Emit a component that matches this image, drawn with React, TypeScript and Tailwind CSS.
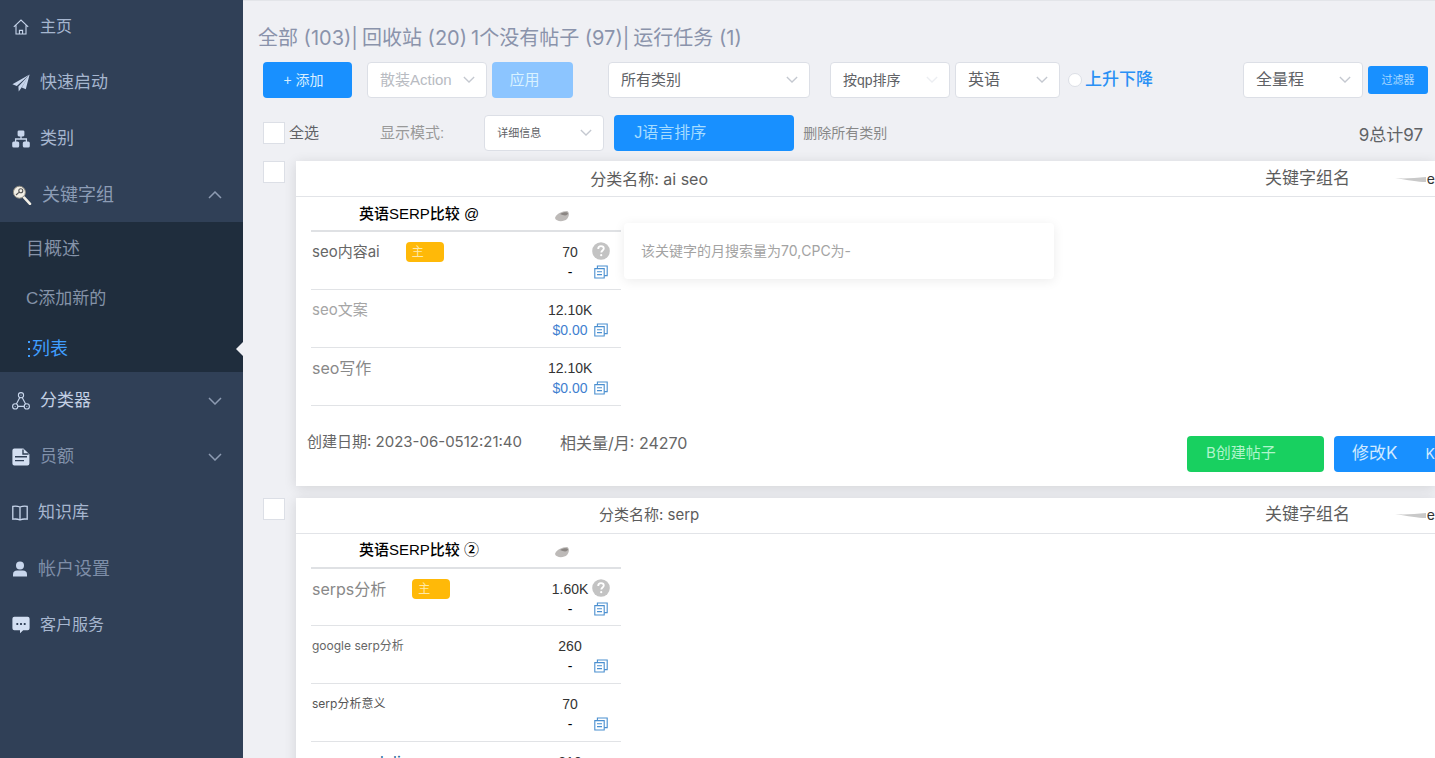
import type { ReactNode } from "react"

const copyIcon = (
    <svg viewBox="0 0 14 14" className="block h-3.5 w-3.5" fill="none" stroke="#4a8fd0" strokeWidth="1.1">
        <path d="M0.8 3.6h9.4v9.4H0.8z" />
        <path d="M3.4 3.6V1h9.8v9.6h-3" />
        <path d="M3 6.8h5M3 9.6h5" />
    </svg>
)

const helpIcon = (
    <svg viewBox="0 0 18 18" className="block h-[18px] w-[18px]">
        <circle cx="9" cy="9" r="8.8" fill="#c3c3c3" />
        <path d="M6.2 6.9c0-1.7 1.2-2.7 2.8-2.7s2.8 1 2.8 2.4c0 1.9-2.5 2-2.5 4" fill="none" stroke="#fff" strokeWidth="1.8" />
        <circle cx="9.2" cy="13.2" r="1.1" fill="#fff" />
    </svg>
)

function Chevron({ up = false, className }: { up?: boolean; className: string }) {
    return (
        <svg viewBox="0 0 14 8" className={className} fill="none" stroke="currentColor" strokeWidth="1.5">
            <path d={up ? "M1 7l6-6 6 6" : "M1 1l6 6 6-6"} />
        </svg>
    )
}

const icons: Record<string, ReactNode> = {
    home: (
        <svg viewBox="0 0 18 18" className="h-[18px] w-[18px]" fill="none" stroke="#c8d6ec" strokeWidth="1.1">
            <path d="M1.8 8.8L9 2l7.2 6.8M4 7v9h10V7" />
            <path d="M7.4 16v-3.6h3.2V16" />
        </svg>
    ),
    plane: (
        <svg viewBox="0 0 18 18" className="h-[18px] w-[18px]" fill="#c8d6ec">
            <path d="M17.6 0.6L0.4 10.2l4.4 1.9zM17.6 0.6L6.4 12.6l0.3 4.8 2.4-3.2zM17.6 0.6l-7.8 12.8 4 1.8z" />
        </svg>
    ),
    tree: (
        <svg viewBox="0 0 18 18" className="h-[18px] w-[18px]" fill="#c8d6ec">
            <rect x="5.6" y="0.4" width="6.8" height="6" rx="1.4" />
            <rect x="0.2" y="11.4" width="7" height="6.2" rx="1.6" />
            <rect x="10.8" y="11.4" width="7" height="6.2" rx="1.6" />
            <path d="M9 6v3M3.6 12V9h10.8v3" fill="none" stroke="#c8d6ec" strokeWidth="1.3" />
        </svg>
    ),
    search: (
        <svg viewBox="0 0 20 20" className="h-5 w-5" fill="none">
            <path d="M12 12.4l6 6.4" stroke="#f2efe6" strokeWidth="2.6" strokeLinecap="round" />
            <circle cx="7.4" cy="7.2" r="6" fill="#f2efe6" stroke="#8d8a80" strokeWidth="1" />
            <path d="M4 10l3-2.6" stroke="#555" strokeWidth="1.2" />
            <circle cx="8.8" cy="5.8" r="2" stroke="#555" strokeWidth="1.1" />
        </svg>
    ),
    nodes: (
        <svg viewBox="0 0 18 18" className="h-[18px] w-[18px]" fill="none" stroke="#c8d6ec" strokeWidth="1.1">
            <circle cx="9" cy="3.2" r="2.6" />
            <circle cx="3.2" cy="14.4" r="2.6" />
            <circle cx="14.8" cy="14.4" r="2.6" />
            <path d="M7.8 5.6L4.4 12M10.2 5.6l3.4 6.4M5.8 14.4h6.4" />
            <path d="M9 2.8v0.8M3.2 14v0.8M14.8 14v0.8" />
        </svg>
    ),
    doc: (
        <svg viewBox="0 0 18 18" className="h-[18px] w-[18px]">
            <path d="M2.4 0.6h9l6 5.6v9.2a2 2 0 0 1-2 2h-13a2 2 0 0 1-2-2V2.6a2 2 0 0 1 2-2z" fill="#d3dff2" />
            <path d="M11 1.4V6h5.6M3 8.8h12M3 12.6h9" fill="none" stroke="#304057" strokeWidth="1.4" />
        </svg>
    ),
    book: (
        <svg viewBox="0 0 16 16" className="h-4 w-4" fill="none" stroke="#c8d6ec" strokeWidth="1.3">
            <path d="M8 2C6 1.2 3 1 0.8 1.4v12.8c2.4-0.4 5.2-0.2 7.2 0.8 2-1 4.8-1.2 7.2-0.8V1.4C13 1 10 1.2 8 2zM8 2V15" />
        </svg>
    ),
    user: (
        <svg viewBox="0 0 16 16" className="h-4 w-4" fill="#c8d6ec">
            <circle cx="8" cy="4.4" r="4" />
            <path d="M1 15.4v-2.2c0-2.2 1.8-3.6 4-3.6h6c2.2 0 4 1.4 4 3.6v2.2z" />
        </svg>
    ),
    chat: (
        <svg viewBox="0 0 18 18" className="h-[18px] w-[18px]">
            <path d="M2.4 0.8h13.2a2 2 0 0 1 2 2v9.4a2 2 0 0 1-2 2h-4.4L8 17.2v-3H2.4a2 2 0 0 1-2-2V2.8a2 2 0 0 1 2-2z" fill="#d3dff2" />
            <path d="M4.4 8h1.8M8.1 8h1.8M11.8 8h1.8" stroke="#304057" strokeWidth="1.8" />
        </svg>
    ),
}

interface NavItemProps {
    icon: string
    label: string
    text: string
    arrow?: "up" | "down"
}

function NavItem({ icon, label, text, arrow }: NavItemProps) {
    return (
        <a href="#" className="flex h-14 items-center gap-2.5 px-3 pt-0.5">
            {icons[icon]}
            <span className={text}>{label}</span>
            {arrow && <Chevron up={arrow === "up"} className="mr-[9px] ml-auto h-2 w-3.5 text-[#8d9bb2]" />}
        </a>
    )
}

interface PickerProps {
    label: string
    value: string
    box: string
    arrow?: string
}

function Picker({ label, value, box, arrow = "text-[#c4c8d0]" }: PickerProps) {
    return (
        <div className={`relative shrink-0 ${box}`}>
            <select aria-label={label} className="h-9 w-full appearance-none rounded border border-[#dcdfe6] bg-white pr-6 pl-3">
                <option>{value}</option>
            </select>
            <Chevron className={`pointer-events-none absolute top-3.5 right-3 h-[7px] w-3 ${arrow}`} />
        </div>
    )
}

const box = "h-[22px] w-[22px] shrink-0 appearance-none border border-[#dcdfe6] bg-white"

interface Keyword {
    name: string
    text: string
    volume: string
    cost: string
    tag?: string
}

interface GroupProps {
    category: string
    title: string
    heading: string
    keywords: Keyword[]
    tip?: string
    footer?: boolean
}

function Group({ category, title, heading, keywords, tip, footer }: GroupProps) {
    return (
        <section className="flex gap-[11px]">
            <input type="checkbox" aria-label={category} className={box} />
            <div className="min-w-0 flex-1 bg-white shadow-[0_2px_12px_rgba(0,0,0,0.12)]">
                <div className="flex h-9 items-center border-b border-[#e2e4e8] text-[#5c5c5c]">
                    <h2 className={`w-[62%] text-center ${title}`}>分类名称: {category}</h2>
                    <div className="ml-auto flex w-[170px] items-center text-[17px] whitespace-nowrap">
                        <span>关键字组名</span>
                        <svg viewBox="0 0 34 10" className="ml-auto h-2.5 w-[34px]">
                            <path d="M2 4c8 1 20 0 31-1v5c-8 0-18-2-31-4z" fill="#c9c9c9" />
                        </svg>
                        <span className="text-sm text-[#333]">e</span>
                    </div>
                </div>
                <div className="relative px-[15px]">
                    <table className="w-[310px] table-fixed border-collapse font-['Liberation_Sans','Noto_Sans_CJK_SC',sans-serif] text-sm text-[#333]">
                        <thead>
                            <tr className="h-[34px] border-b-2 border-[#dfe1e4] text-black">
                                <th className="pl-12 text-left text-[15px] font-medium">{heading}</th>
                                <th className="w-11">
                                    <svg viewBox="0 0 16 12" className="mt-1 ml-1.5 h-3 w-4">
                                        <path d="M1 8C2 4 8 1 13 1c3 1 2 6 0 8-3 3-11 3-12-1z" fill="#bdbab8" />
                                        <path d="M6 4c3-2 7-2 8-1 0 3-4 3-8 1z" fill="#8b8683" />
                                    </svg>
                                </th>
                                <th className="w-[29px]"></th>
                            </tr>
                        </thead>
                        <tbody>
                            {keywords.map((k) => (
                                <tr key={k.name} className="h-[58px] border-b border-[#e1e3e6] align-top leading-5">
                                    <td className="pt-2.5 pl-px">
                                        <div className="flex h-5 items-center gap-[26px] font-['Inter','Noto_Sans_CJK_SC',sans-serif]">
                                            <span className={k.text}>{k.name}</span>
                                            {k.tag !== undefined && (
                                                <span className="h-5 w-[38px] rounded bg-[#ffb908] pl-1.5 text-xs leading-5 text-[#ffe9a8]">{k.tag}</span>
                                            )}
                                        </div>
                                    </td>
                                    <td className="pt-2.5 text-center whitespace-nowrap">
                                        <div>{k.volume}</div>
                                        <div className={k.cost === "-" ? "text-black" : "text-[#3f7fd0]"}>{k.cost}</div>
                                    </td>
                                    <td className="pt-2.5">
                                        <div className="h-5">{k.tag !== undefined && helpIcon}</div>
                                        <button aria-label="复制" className="ml-0.5 block pt-[3px]">{copyIcon}</button>
                                    </td>
                                </tr>
                            ))}
                        </tbody>
                    </table>
                    {tip && (
                        <div role="tooltip" className="absolute top-[26px] left-[328px] flex h-14 w-[430px] items-center rounded bg-white pl-[17px] text-sm text-[#a3a3a3] shadow-[0_2px_12px_rgba(0,0,0,0.08)]">
                            {tip}
                        </div>
                    )}
                </div>
                {footer && (
                    <div className="flex h-20 items-center pb-1.5 pl-[11px] text-[15px] text-[#666]">
                        <span className="whitespace-nowrap">创建日期: 2023-06-0512:21:40</span>
                        <span className="ml-[38px] text-base whitespace-nowrap">相关量/月: 24270</span>
                        <button className="mt-[22px] ml-auto h-9 w-[137px] rounded bg-[#18d060] pl-[19px] text-left text-[#b0f5cc]">B创建帖子</button>
                        <button className="mt-[22px] ml-2.5 flex h-9 w-[101px] items-center justify-between rounded-l bg-[#1890ff] pl-[18px] text-[17px] text-[#d0eaff]">
                            修改K <span className="text-sm">K</span>
                        </button>
                    </div>
                )}
            </div>
        </section>
    )
}

const seoKeywords: Keyword[] = [
    { name: "seo内容ai", text: "text-[15px] text-[#666]", volume: "70", cost: "-", tag: "主" },
    { name: "seo文案", text: "text-[15px] text-[#a5a5a5]", volume: "12.10K", cost: "$0.00" },
    { name: "seo写作", text: "text-base text-[#888]", volume: "12.10K", cost: "$0.00" },
]

const serpKeywords: Keyword[] = [
    { name: "serps分析", text: "text-base text-[#888]", volume: "1.60K", cost: "-", tag: "主" },
    { name: "google serp分析", text: "text-xs text-[#666]", volume: "260", cost: "-" },
    { name: "serp分析意义", text: "text-xs text-[#555]", volume: "70", cost: "-" },
    { name: "serp modeling", text: "text-base text-[#266a9c]", volume: "210", cost: "-" },
]

export default function App() {
    return (
        <div className="flex h-screen overflow-hidden bg-[#eff0f4] font-['Liberation_Sans','Noto_Sans_CJK_SC',sans-serif]">
            <nav className="w-[243px] shrink-0 bg-[#304057] text-[#a6b6cf]">
                <div className="-mt-0.5">
                    <NavItem icon="home" label="主页" text="text-base" />
                    <NavItem icon="plane" label="快速启动" text="text-[17px]" />
                    <NavItem icon="tree" label="类别" text="text-[17px]" />
                    <NavItem icon="search" label="关键字组" text="text-lg text-[#8c9cb5]" arrow="up" />
                </div>
                <div className="bg-[#1f2d3d] pl-[26px] text-[#8593a8]">
                    <a href="#" className="flex h-[50px] items-center pt-[3px] text-lg">目概述</a>
                    <a href="#" className="flex h-[50px] items-center pt-[3px] text-[17px]">C添加新的</a>
                    <a href="#" className="flex h-[50px] items-center pt-[3px] text-lg text-[#409eff]">
                        <svg viewBox="0 0 6 18" className="h-[18px] w-1.5" fill="#409eff">
                            <path d="M2 1h2v2H2zM2 8h2v2H2zM2 15h2v2H2z" />
                        </svg>
                        列表
                        <svg viewBox="0 0 7 14" className="ml-auto h-3.5 w-[7px]" fill="#eff0f4">
                            <path d="M7 0v14L0 7z" />
                        </svg>
                    </a>
                </div>
                <NavItem icon="nodes" label="分类器" text="text-[17px] text-[#c3d0e4]" arrow="down" />
                <NavItem icon="doc" label="员额" text="text-[17px] text-[#8292ab]" arrow="down" />
                <NavItem icon="book" label="知识库" text="text-[17px]" />
                <NavItem icon="user" label="帐户设置" text="text-lg text-[#7e8ea8]" />
                <NavItem icon="chat" label="客户服务" text="text-base" />
            </nav>

            <main className="min-w-0 flex-1 border-t border-[#e3e5e9] pl-5">
                <div className="-ml-[5px] flex h-[61px] items-center gap-1 pt-3 font-['Inter','Noto_Sans_CJK_SC',sans-serif] text-xl whitespace-nowrap text-[#8a93ab]">
                    <a href="#">全部 (103)|</a>
                    <a href="#">回收站 (20)</a>
                    <a href="#">1个没有帖子 (97)|</a>
                    <a href="#">运行任务 (1)</a>
                </div>

                <div className="flex items-center pr-[7px] whitespace-nowrap text-[#606266]">
                    <button className="h-9 w-[89px] shrink-0 rounded bg-[#1890ff] pr-2 text-sm text-[#d8efff]">+ 添加</button>
                    <Picker label="批量操作" value="散装Action" box="ml-[15px] w-[120px] text-[15px] text-[#b8bbc2]" />
                    <button className="ml-[5px] h-9 w-[81px] shrink-0 rounded bg-[#8cc5ff] pr-4 text-[15px] text-[#d9f2ff]">应用</button>
                    <Picker label="类别" value="所有类别" box="ml-[35px] w-[202px] text-[15px]" />
                    <Picker label="排序" value="按qp排序" box="ml-5 w-[120px] text-sm" arrow="text-[#eceef2]" />
                    <Picker label="语言" value="英语" box="ml-[5px] w-[105px] text-base" />
                    <label className="ml-2 flex items-center gap-[3px] text-[17px] font-medium text-[#2a90f5]">
                        <input type="radio" className="h-3.5 w-3.5 appearance-none rounded-full border border-[#dcdfe6] bg-white" />
                        上升下降
                    </label>
                    <Picker label="范围" value="全量程" box="ml-auto w-[120px] text-base" />
                    <button className="ml-[5px] h-7 w-[60px] shrink-0 rounded-[3px] bg-[#1890ff] text-[11px] text-[#a8d8ff]">过滤器</button>
                </div>

                <div className="mt-[17px] flex items-center pr-3 whitespace-nowrap text-[#606266]">
                    <label className="flex items-center gap-1 text-[15px]">
                        <input type="checkbox" className={box} />
                        全选
                    </label>
                    <span className="ml-[61px] text-[15px] text-[#999]">显示模式:</span>
                    <Picker label="显示模式" value="详细信息" box="ml-10 w-[120px] text-[11px]" />
                    <button className="ml-2.5 h-9 w-[180px] rounded bg-[#1890ff] pl-5 text-left text-base text-[#a5dcff]">J语言排序</button>
                    <a href="#" className="ml-[9px] text-sm text-[#888]">删除所有类别</a>
                    <span className="ml-auto pt-1.5 font-['Inter','Noto_Sans_CJK_SC',sans-serif] text-[17px]">9总计97</span>
                </div>

                <div className="mt-2.5 flex flex-col gap-3 font-['Inter','Noto_Sans_CJK_SC',sans-serif]">
                    <Group
                        category="ai seo"
                        title="text-base"
                        heading="英语SERP比较 @"
                        keywords={seoKeywords}
                        tip="该关键字的月搜索量为70,CPC为-"
                        footer
                    />
                    <Group category="serp" title="text-[15px]" heading="英语SERP比较 ②" keywords={serpKeywords} />
                </div>
            </main>
        </div>
    )
}
